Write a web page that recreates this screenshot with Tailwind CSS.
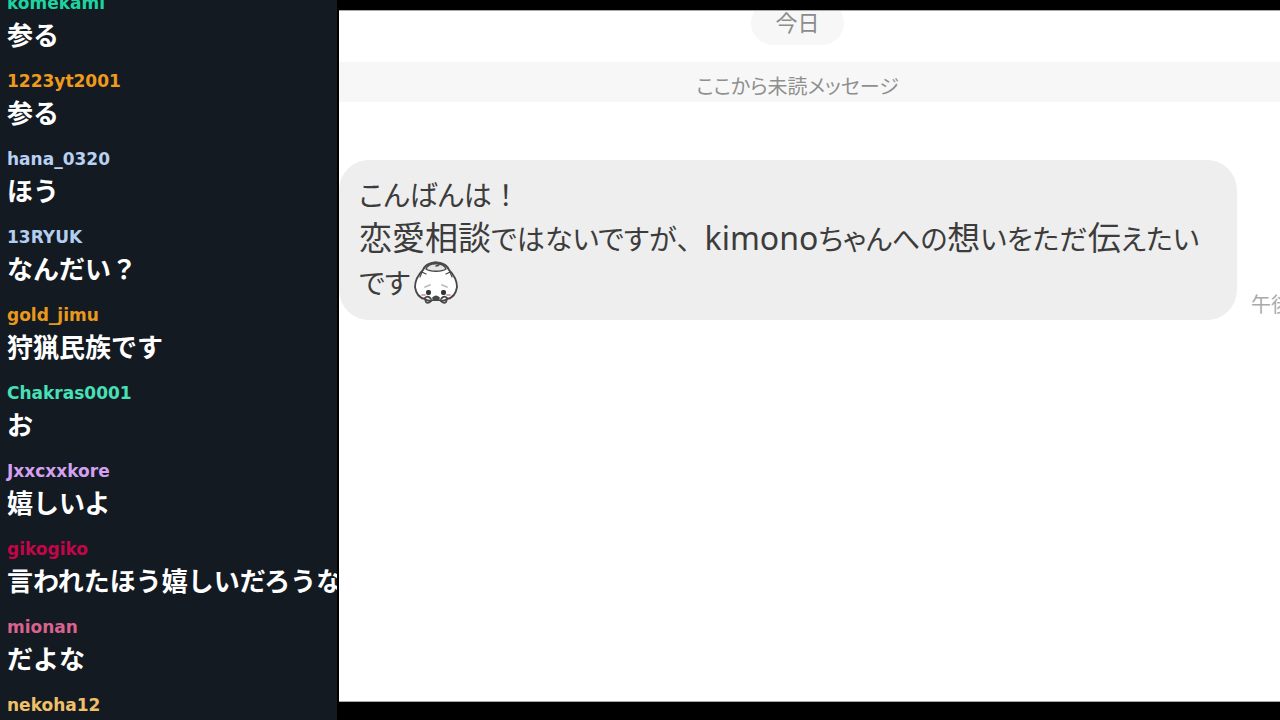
<!DOCTYPE html>
<html lang="ja">
  <head>
    <meta charset="UTF-8" />
    <meta name="viewport" content="width=device-width, initial-scale=1.0" />
    <title>Chat</title>
    <script src="https://cdn.jsdelivr.net/npm/@tailwindcss/browser@4"></script>
  </head>
  <body class="flex h-screen overflow-hidden bg-black font-['Noto_Sans_CJK_JP',sans-serif]">
    <!-- stream chat -->
    <aside class="w-[337px] shrink-0 overflow-hidden bg-[#131a22] pl-[7px]">
      <ul class="-mt-3 whitespace-nowrap font-bold text-white">
        <li class="pb-4">
          <p class="font-['DejaVu_Sans',sans-serif] text-[17px] leading-[30px] text-[#1fd3a0]">komekami</p>
          <p class="text-[26px] leading-8">参る</p>
        </li>
        <li class="pb-4">
          <p class="font-['DejaVu_Sans',sans-serif] text-[17px] leading-[30px] text-[#ee9a1c]">1223yt2001</p>
          <p class="text-[26px] leading-8">参る</p>
        </li>
        <li class="pb-4">
          <p class="font-['DejaVu_Sans',sans-serif] text-[17px] leading-[30px] text-[#b9d0f2]">hana_0320</p>
          <p class="text-[26px] leading-8">ほう</p>
        </li>
        <li class="pb-4">
          <p class="font-['DejaVu_Sans',sans-serif] text-[17px] leading-[30px] text-[#b3cff0]">13RYUK</p>
          <p class="text-[26px] leading-8">なんだい？</p>
        </li>
        <li class="pb-4">
          <p class="font-['DejaVu_Sans',sans-serif] text-[17px] leading-[30px] text-[#e8991d]">gold_jimu</p>
          <p class="text-[26px] leading-8">狩猟民族です</p>
        </li>
        <li class="pb-4">
          <p class="font-['DejaVu_Sans',sans-serif] text-[17px] leading-[30px] text-[#48e0b8]">Chakras0001</p>
          <p class="text-[26px] leading-8">お</p>
        </li>
        <li class="pb-4">
          <p class="font-['DejaVu_Sans',sans-serif] text-[17px] leading-[30px] text-[#d3a0f2]">Jxxcxxkore</p>
          <p class="text-[26px] leading-8">嬉しいよ</p>
        </li>
        <li class="pb-4">
          <p class="font-['DejaVu_Sans',sans-serif] text-[17px] leading-[30px] text-[#c4054a]">gikogiko</p>
          <p class="text-[26px] leading-8">言われたほう嬉しいだろうな</p>
        </li>
        <li class="pb-4">
          <p class="font-['DejaVu_Sans',sans-serif] text-[17px] leading-[30px] text-[#d9628f]">mionan</p>
          <p class="text-[26px] leading-8">だよな</p>
        </li>
        <li class="pb-4">
          <p class="font-['DejaVu_Sans',sans-serif] text-[17px] leading-[30px] text-[#f0c069]">nekoha12</p>
        </li>
      </ul>
    </aside>

    <!-- message window -->
    <main class="mt-2.5 mb-[18px] ml-0.5 min-w-0 flex-1 overflow-hidden border-y border-[#aaa] bg-white [font-feature-settings:'palt']">
      <div class="flex justify-center pr-6">
        <time class="-mt-2.5 rounded-full bg-[#f7f7f7] px-6 pt-1 pb-2 text-[22px] leading-8 text-[#8c8c8c]">今日</time>
      </div>
      <div class="mt-[17px] bg-[#f7f7f7] pr-6 text-center text-xl text-[#8f8f8f]">
        <p class="pt-2 leading-8">ここから未読メッセージ</p>
      </div>
      <div class="mt-[58px] flex items-end gap-3.5">
        <div class="min-w-0 flex-1 rounded-[30px] bg-[#eee] pt-3 pb-4 pl-5 text-[28px] leading-11 text-[#3c3c3c]">
          <p>こんばんは<span class="[font-feature-settings:normal]">！</span></p>
          <p class="whitespace-nowrap"><span class="text-[33px] leading-none">恋愛相談</span>ではないですが<span class="[font-feature-settings:normal]">、</span><span class="font-['Noto_Sans'] text-[32px] leading-none">kimono</span>ちゃんへの<span class="text-[33px] leading-none">想</span>いをただ<span class="text-[33px] leading-none">伝</span>えたい</p>
          <p class="flex items-center">
            です
            <svg class="ml-1 size-11" viewBox="0 0 44 44" fill="none" stroke="#484848" stroke-width="1.8" stroke-linecap="round" stroke-linejoin="round">
              <path d="M10 36L12 42Q14 44 17 41M34 36L32 42Q30 44 27 41" fill="#fff" />
              <path d="M9 10C12 0 32 0 35 10C40 15 43 21 43 27C42 34 38 38 33 39C30 41 27 41 25 40H19C17 41 14 41 11 39C6 38 2 34 1 27C1 21 4 15 9 10Z" fill="#fff" />
              <path d="M12 9C14 2 30 2 32 9C28 12 16 12 12 9Z" fill="#e4e4e4" stroke-width="1.4" />
              <path d="M17 4Q21 1 24 3Q27 5 22 6" stroke-width="1.4" />
              <path d="M6 17L8 12L12 14M38 17L36 12L32 14" stroke-width="1.2" />
              <path d="M11 27L16 25M33 27L28 25" stroke="#bbb" />
              <path d="M11 38Q14 35 17 39M33 38Q30 35 27 39" />
              <path d="M19 38Q22 35 25 38L22 40Z" fill="#484848" />
              <rect x="12" y="30" width="5" height="5" rx="2" fill="#333" stroke="none" />
              <rect x="27" y="30" width="5" height="5" rx="2" fill="#333" stroke="none" />
              <path d="M8 35H11M33 35H36" stroke="#dba8a8" />
            </svg>
          </p>
        </div>
        <time class="w-[29px] shrink-0 overflow-hidden whitespace-nowrap text-xl leading-8 text-[#aaa]">午後</time>
      </div>
    </main>
  </body>
</html>
